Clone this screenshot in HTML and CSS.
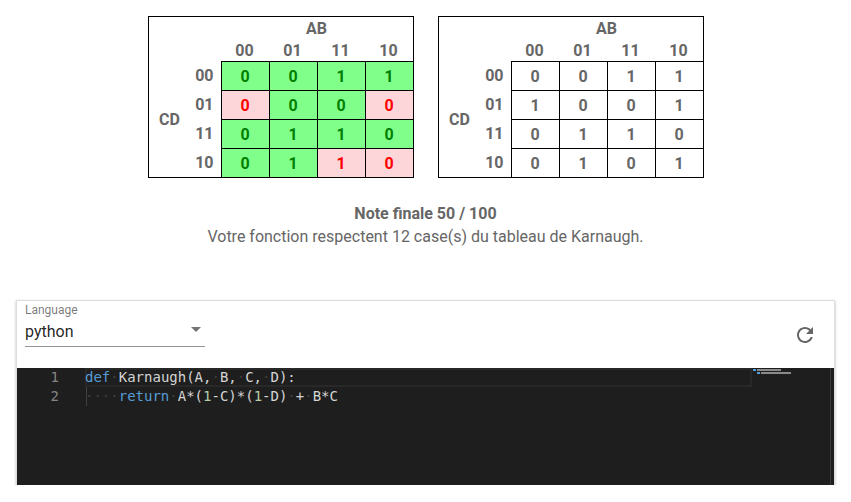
FILE: index.html
```html
<!DOCTYPE html>
<html lang="fr">
<head>
<meta charset="utf-8">
<title>Karnaugh</title>
<link rel="stylesheet" href="styles.css">
</head>
<body>
<div class="kmaps">
  <div class="kmap">
    <div class="spacer"></div><div class="ab">AB</div>
    <div class="spacer"></div><div>00</div><div>01</div><div>11</div><div>10</div>
    <div class="cd">CD</div>
    <div class="rowh">00</div>
    <div class="cell ok">0</div><div class="cell ok">0</div><div class="cell ok">1</div><div class="cell ok">1</div>
    <div class="rowh">01</div>
    <div class="cell bad">0</div><div class="cell ok">0</div><div class="cell ok">0</div><div class="cell bad">0</div>
    <div class="rowh">11</div>
    <div class="cell ok">0</div><div class="cell ok">1</div><div class="cell ok">1</div><div class="cell ok">0</div>
    <div class="rowh">10</div>
    <div class="cell ok">0</div><div class="cell ok">1</div><div class="cell bad">1</div><div class="cell bad">0</div>
  </div>
  <div class="kmap">
    <div class="spacer"></div><div class="ab">AB</div>
    <div class="spacer"></div><div>00</div><div>01</div><div>11</div><div>10</div>
    <div class="cd">CD</div>
    <div class="rowh">00</div>
    <div class="cell">0</div><div class="cell">0</div><div class="cell">1</div><div class="cell">1</div>
    <div class="rowh">01</div>
    <div class="cell">1</div><div class="cell">0</div><div class="cell">0</div><div class="cell">1</div>
    <div class="rowh">11</div>
    <div class="cell">0</div><div class="cell">1</div><div class="cell">1</div><div class="cell">0</div>
    <div class="rowh">10</div>
    <div class="cell">0</div><div class="cell">1</div><div class="cell">0</div><div class="cell">1</div>
  </div>
</div>

<div class="result">
  <div class="score">Note finale 50 / 100</div>
  <div class="detail">Votre fonction respectent 12 case(s) du tableau de Karnaugh.</div>
</div>

<div class="card">
  <div class="toolbar">
    <div class="select">
      <div class="select-label">Language</div>
      <div class="select-value"><span>python</span><span class="arrow"></span></div>
    </div>
    <svg class="refresh" viewBox="0 0 24 24" width="24" height="24"><path fill="#666" d="M17.65 6.35C16.2 4.9 14.21 4 12 4c-4.42 0-7.99 3.58-7.99 8s3.57 8 7.99 8c3.730 0 6.84-2.55 7.73-6h-2.08c-.82 2.33-3.04 4-5.65 4-3.31 0-6-2.69-6-6s2.69-6 6-6c1.66 0 3.14.69 4.22 1.78L13 11h7V4l-2.35 2.35z"/></svg>
  </div>
  <div class="editor">
    <div class="gutter">
      <div class="ln">1</div>
      <div class="ln">2</div>
    </div>
    <div class="code">
      <div class="line current"><span class="kw">def</span><span class="ws">·</span>Karnaugh(A,<span class="ws">·</span>B,<span class="ws">·</span>C,<span class="ws">·</span>D):</div>
      <div class="line"><span class="guide"></span><span class="ws">····</span><span class="kw">return</span><span class="ws">·</span>A*(<span class="num">1</span>-C)*(<span class="num">1</span>-D)<span class="ws">·</span>+<span class="ws">·</span>B*C</div>
    </div>
    <div class="minimap">
      <span class="mm-line mm-a"></span><span class="mm-line mm-b"></span>
    </div>
    <div class="vscroll"></div>
  </div>
</div>
</body>
</html>
```

FILE: styles.css
```css
html, body {
  margin: 0;
  padding: 0;
  background: #fff;
  font-family: Roboto, "Liberation Sans", sans-serif;
}

.kmaps {
  display: flex;
  justify-content: center;
  gap: 24px;
  padding-top: 16px;
}

.kmap {
  display: grid;
  grid-template-columns: 42px 30px repeat(4, 48px);
  grid-template-rows: 22px 22px repeat(4, 29px);
  border: 1px solid #000;
  font-weight: 700;
  font-size: 16px;
  color: #666;
}

.kmap > div {
  display: flex;
  align-items: center;
  justify-content: center;
  box-sizing: border-box;
}

.kmap > .spacer { grid-column: span 2; }
.kmap > .ab { grid-column: span 4; }

.kmap > .cd {
  grid-column: 1;
  grid-row: 3 / 7;
}

.kmap > .rowh {
  justify-content: flex-end;
  padding-right: 7px;
}

.kmap > .cell {
  border-left: 1px solid #000;
  border-top: 1px solid #000;
}

.kmap > .cell.ok {
  background: #80ff8a;
  color: #008000;
}

.kmap > .cell.bad {
  background: #fdd6da;
  color: #ff0000;
}

.result {
  margin-top: 24px;
  text-align: center;
  color: #666;
  font-size: 16px;
  line-height: 23px;
}

.score { font-weight: 700; }

.card {
  margin: 52px 16px 0;
  box-shadow: 0 1px 3px rgba(0,0,0,0.2), 0 1px 1px rgba(0,0,0,0.14);
  border: 1px solid #ddd;
  border-bottom: none;
}

.toolbar {
  height: 67px;
  display: flex;
  justify-content: space-between;
  align-items: flex-start;
  padding: 0 17px 0 8px;
  background: #fff;
}

.select {
  width: 180px;
  padding-top: 2px;
}

.select-label {
  font-size: 12px;
  line-height: 14px;
  color: rgba(0,0,0,0.54);
}

.select-value {
  display: flex;
  justify-content: space-between;
  align-items: center;
  font-size: 16px;
  color: rgba(0,0,0,0.87);
  height: 29px;
  border-bottom: 1px solid rgba(0,0,0,0.42);
}

.arrow {
  width: 0;
  height: 0;
  border-left: 5px solid transparent;
  border-right: 5px solid transparent;
  border-top: 5px solid #757575;
  margin-right: 4px;
  margin-top: -4px;
}

.refresh {
  margin-top: 22px;
}

.editor {
  position: relative;
  height: 117px;
  background: #1e1e1e;
  display: flex;
  font-family: "DejaVu Sans Mono", monospace;
  font-size: 14px;
  line-height: 19px;
  color: #d4d4d4;
}

.gutter {
  width: 42px;
  text-align: right;
  color: #858585;
}

.code {
  margin-left: 26px;
  flex: 1;
  margin-right: 82px;
}

.line {
  position: relative;
  height: 19px;
  white-space: pre;
}

.line.current {
  box-shadow: inset 0 0 0 2px #282828;
}

.kw { color: #569cd6; }
.num { color: #b5cea8; }
.ws { color: rgba(227,228,226,0.18); }

.guide {
  position: absolute;
  left: 1px;
  top: 0;
  bottom: 0;
  width: 1px;
  background: #404040;
}

.minimap {
  position: absolute;
  left: 736px;
  top: 1px;
  width: 40px;
}

.mm-line {
  display: block;
  height: 2px;
  margin-bottom: 1px;
  background: linear-gradient(90deg, #569cd6 0 3px, #1e1e1e 3px 4px, #8a8a8a 4px);
}
.mm-a { width: 28px; }
.mm-b { width: 34px; margin-left: 4px; }

.vscroll {
  position: absolute;
  right: 0;
  top: 0;
  bottom: 0;
  width: 3px;
  border-left: 1px solid #3a3a3a;
  background: #1e1e1e;
}
```
